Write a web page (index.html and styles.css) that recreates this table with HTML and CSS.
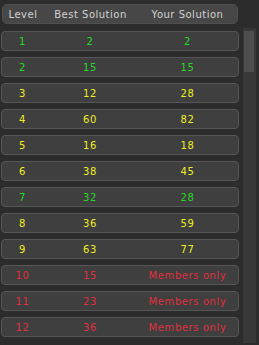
FILE: index.html
```html
<!DOCTYPE html>
<html>
<head>
<meta charset="utf-8">
<link rel="stylesheet" href="styles.css">
</head>
<body>
<div class="panel">
  <div class="main">
    <div class="header">
      <span>Level</span><span>Best Solution</span><span>Your Solution</span>
    </div>
    <div class="rows">
      <div class="row green"><span>1</span><span>2</span><span>2</span></div>
      <div class="row green"><span>2</span><span>15</span><span>15</span></div>
      <div class="row yellow"><span>3</span><span>12</span><span>28</span></div>
      <div class="row yellow"><span>4</span><span>60</span><span>82</span></div>
      <div class="row yellow"><span>5</span><span>16</span><span>18</span></div>
      <div class="row yellow"><span>6</span><span>38</span><span>45</span></div>
      <div class="row green"><span>7</span><span>32</span><span>28</span></div>
      <div class="row yellow"><span>8</span><span>36</span><span>59</span></div>
      <div class="row yellow"><span>9</span><span>63</span><span>77</span></div>
      <div class="row red"><span>10</span><span>15</span><span>Members only</span></div>
      <div class="row red"><span>11</span><span>23</span><span>Members only</span></div>
      <div class="row red"><span>12</span><span>36</span><span>Members only</span></div>
    </div>
  </div>
  <div class="scrollbar"><div class="thumb"></div></div>
</div>
</body>
</html>
```

FILE: styles.css
```css
html, body {
  margin: 0;
  padding: 0;
  background: #2c2c2c;
  width: 259px;
  height: 345px;
  overflow: hidden;
}
.panel {
  display: flex;
  font-family: "DejaVu Sans", Verdana, sans-serif;
  font-size: 10px;
}
.main {
  width: 238px;
  margin-left: 1px;
  padding-top: 4px;
}
.header {
  margin-left: 1px;
  width: 234px;
  height: 18px;
  border: 1px solid #4f4f4f;
  border-radius: 5px;
  background: #474747;
  color: #d2d2d2;
  display: grid;
  grid-template-columns: 40px 95px 1fr;
  align-items: center;
  text-align: center;
  letter-spacing: 0.5px;
}
.rows {
  display: flex;
  flex-direction: column;
  gap: 6px;
  margin-top: 7px;
}
.row {
  height: 18px;
  border: 1px solid #555555;
  border-radius: 4px;
  background: #3f3f3f;
  display: grid;
  grid-template-columns: 41px 94px 1fr;
  align-items: center;
  text-align: center;
  box-sizing: content-box;
  width: 236px;
  letter-spacing: 0.6px;
}
.green { color: #25d925; }
.yellow { color: #eeee22; }
.red { color: #e0303f; }
.scrollbar {
  margin-left: 4px;
  margin-top: 28px;
  width: 13px;
  height: 315px;
  background: #383838;
  box-sizing: border-box;
  padding: 3px 2px 0 1px;
}
.thumb {
  height: 41px;
  background: #4e4e4e;
}
```
